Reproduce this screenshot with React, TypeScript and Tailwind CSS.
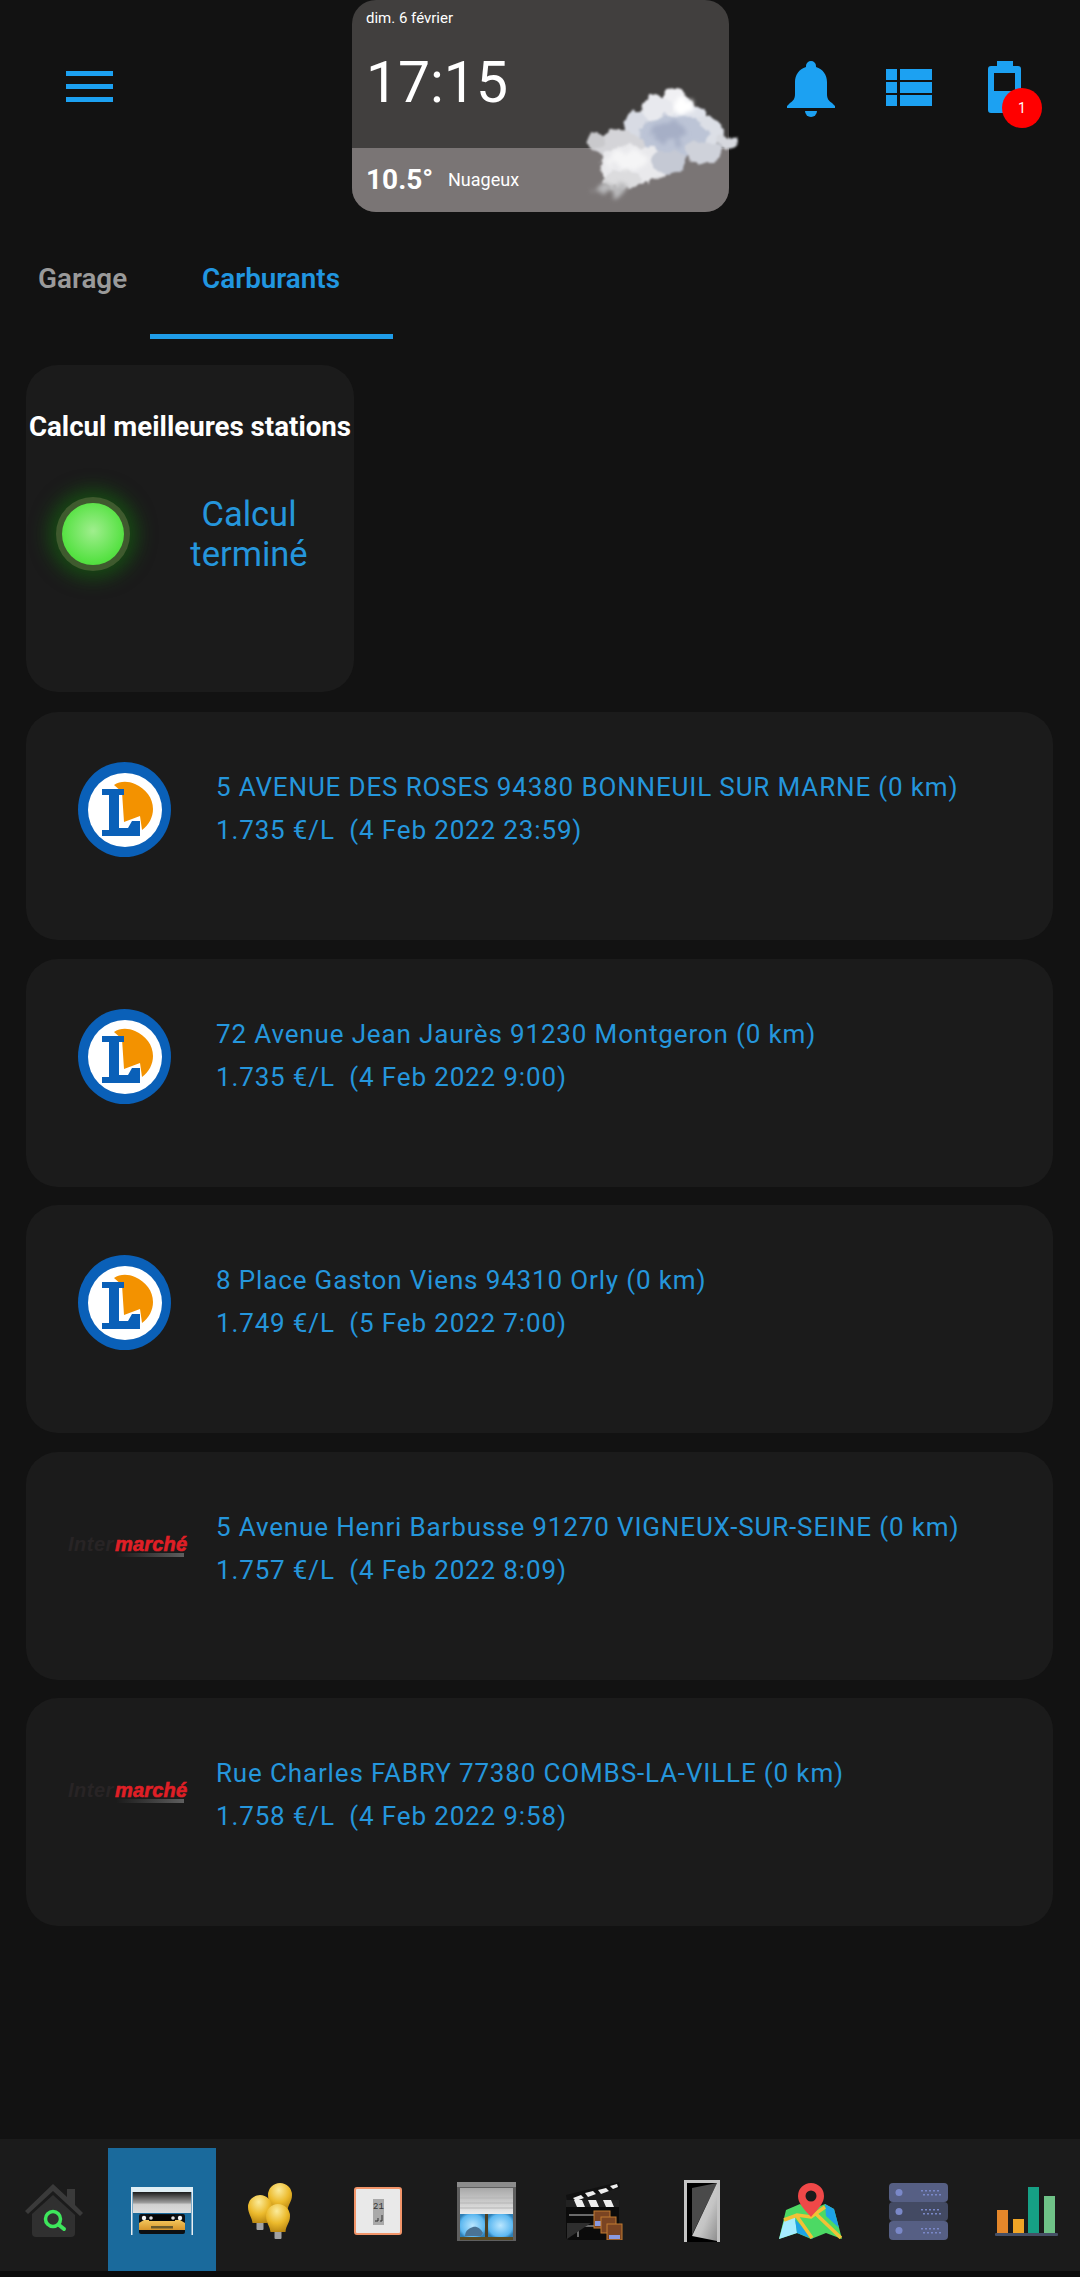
import React from "react";

const L = "font-['Roboto',sans-serif]";

function Bell() {
  return (
    <svg width="48" height="56" viewBox="0 0 48 56" className="text-[#1ca1f2]">
      <path fill="currentColor" d="M24 0a5 5 0 0 1 5 5v1c7 2 11 8 11 15v12c0 5 2 7 5 9l3 3v2H0v-2l3-3c3-2 5-4 5-9V21c0-7 4-13 11-15V5a5 5 0 0 1 5-5z" />
      <path fill="currentColor" d="M18 50h12a6 6 0 0 1-12 0z" />
    </svg>
  );
}

function TableIcon() {
  return (
    <svg width="46" height="37" viewBox="0 0 46 37">
      <g fill="#1ca1f2">
        <rect x="0" y="0" width="11" height="11" /><rect x="14" y="0" width="32" height="11" />
        <rect x="0" y="13" width="11" height="11" /><rect x="14" y="13" width="32" height="11" />
        <rect x="0" y="26" width="11" height="11" /><rect x="14" y="26" width="32" height="11" />
      </g>
    </svg>
  );
}

function Battery() {
  return (
    <div className="relative w-[33px] h-[52px]">
      <svg width="33" height="52" viewBox="0 0 33 52">
        <path fill="#1ca1f2" d="M9 0h16v5h5a3 3 0 0 1 3 3v41a3 3 0 0 1-3 3H3a3 3 0 0 1-3-3V8a3 3 0 0 1 3-3h6z" />
        <rect x="6" y="12" width="21" height="18" fill="#121212" />
      </svg>
      <div className={`absolute left-[14px] top-[27px] w-10 h-10 rounded-full bg-[#ff0000] text-white text-[14px] flex items-center justify-center ${L}`}>1</div>
    </div>
  );
}

function Cloud() {
  return (
    <svg width="185" height="139" viewBox="-16 -16 185 139" className="absolute left-[217px] top-[72px]">
      <defs>
        <filter id="cl" x="-20%" y="-20%" width="140%" height="140%">
          <feTurbulence type="fractalNoise" baseFrequency="0.08" numOctaves="4" seed="7" result="n" />
          <feDisplacementMap in="SourceGraphic" in2="n" scale="12" xChannelSelector="R" yChannelSelector="G" />
          <feGaussianBlur stdDeviation="1.1" />
        </filter>
        <filter id="cl2" x="-20%" y="-20%" width="140%" height="140%">
          <feTurbulence type="fractalNoise" baseFrequency="0.11" numOctaves="3" seed="12" result="n" />
          <feDisplacementMap in="SourceGraphic" in2="n" scale="18" xChannelSelector="G" yChannelSelector="R" />
          <feGaussianBlur stdDeviation="2" />
        </filter>
      </defs>
      <g filter="url(#cl)">
        <circle cx="90" cy="14" r="13" fill="#f0f0f3" />
        <circle cx="72" cy="24" r="16" fill="#e8e9ee" />
        <circle cx="52" cy="36" r="13" fill="#d8dbe4" />
        <circle cx="104" cy="30" r="16" fill="#dfe2ea" />
        <circle cx="124" cy="44" r="14" fill="#dcdfe6" />
        <ellipse cx="142" cy="54" rx="10" ry="7" fill="#d6d8de" />
        <ellipse cx="88" cy="48" rx="34" ry="22" fill="#bcc4d6" />
        <ellipse cx="118" cy="64" rx="18" ry="12" fill="#cfd2da" />
        <ellipse cx="34" cy="58" rx="26" ry="16" fill="#d4d4d8" />
        <ellipse cx="12" cy="52" rx="9" ry="7" fill="#c9c9cc" />
        <ellipse cx="48" cy="78" rx="34" ry="20" fill="#e9e9ec" />
        <ellipse cx="84" cy="74" rx="16" ry="12" fill="#c5c9d4" />
        <ellipse cx="36" cy="92" rx="20" ry="9" fill="#dcdcde" />
      </g>
      <g filter="url(#cl2)">
        <ellipse cx="28" cy="101" rx="16" ry="5" fill="#b9b9bb" />
        <ellipse cx="85" cy="44" rx="20" ry="10" fill="#a6afc6" />
        <ellipse cx="44" cy="72" rx="20" ry="9" fill="#f5f5f6" />
        <ellipse cx="98" cy="18" rx="10" ry="7" fill="#ffffff" />
      </g>
    </svg>
  );
}

function WeatherCard() {
  return (
    <div className={`relative w-[377px] h-[212px] ${L}`}>
      <div className="h-full rounded-[24px] overflow-hidden flex flex-col bg-[#413f3e] text-white">
        <div className="h-[148px] pl-[14px] pt-[8px]">
          <div className="text-[15px] leading-[20px]">dim. 6 février</div>
          <div className="text-[57px] leading-[68px] mt-[21px]">17:15</div>
        </div>
        <div className="h-[64px] bg-[#7a7575] flex items-center pl-[14px]">
          <span className="text-[28px] font-bold leading-none w-[82px]">10.5°</span>
          <span className="text-[18px] leading-none">Nuageux</span>
        </div>
      </div>
      <Cloud />
    </div>
  );
}

function Leclerc() {
  return (
    <svg width="93" height="95" viewBox="0 0 93 95" className="shrink-0">
      <ellipse cx="46.5" cy="47.5" rx="46.5" ry="47.5" fill="#0a60b8" />
      <ellipse cx="47" cy="48" rx="37" ry="37" fill="#ffffff" />
      <path d="M36 23 C42 19 50 19 57 22 C68 27 75 36 75 47 C75 55 71 63 64 68 L62 54 L46 60 L44 30z" fill="#f39200" />
      <path d="M24 27H46V33H41V66H50L54 59H62V74H24V68H31V33H24z" fill="#0a60b8" />
    </svg>
  );
}

function Intermarche() {
  return (
    <div className="shrink-0 w-[118px] flex flex-col items-start">
      <div className="flex items-end leading-none italic font-bold font-['Liberation_Sans',sans-serif] text-[20px]">
        <span className="text-[#282425] tracking-[0.5px] w-[47px]">Inter</span>
        <span className="text-[#e01f26] [-webkit-text-stroke:0.6px_#e01f26] tracking-[0.2px]">marché</span>
      </div>
      <div className="ml-[49px] -mt-[1px] w-[67px] h-[4px] bg-gradient-to-r from-[#1c1c1c] to-[#5e5e5e]" />
    </div>
  );
}

const stations = [
  { logo: "l", a: "5 AVENUE DES ROSES 94380 BONNEUIL SUR MARNE (0 km)", b: "1.735 €/L\u00a0\u00a0(4 Feb 2022 23:59)" },
  { logo: "l", a: "72 Avenue Jean Jaurès 91230 Montgeron (0 km)", b: "1.735 €/L\u00a0\u00a0(4 Feb 2022 9:00)" },
  { logo: "l", a: "8 Place Gaston Viens 94310 Orly (0 km)", b: "1.749 €/L\u00a0\u00a0(5 Feb 2022 7:00)" },
  { logo: "i", a: "5 Avenue Henri Barbusse 91270 VIGNEUX-SUR-SEINE (0 km)", b: "1.757 €/L\u00a0\u00a0(4 Feb 2022 8:09)" },
  { logo: "i", a: "Rue Charles FABRY 77380 COMBS-LA-VILLE (0 km)", b: "1.758 €/L\u00a0\u00a0(4 Feb 2022 9:58)" },
];

function StationCard({ s }: { s: (typeof stations)[number] }) {
  return (
    <div className="h-[228px] rounded-[32px] bg-[#1b1b1b] flex items-start">
      <div className="w-[190px] pl-[52px] shrink-0">
        {s.logo === "l" ? <div className="mt-[50px]"><Leclerc /></div> : <div className="mt-[82px] -ml-[10px]"><Intermarche /></div>}
      </div>
      <div className="pt-[54px] text-[#2596dc] text-[26px] leading-[43px] tracking-[0.85px] whitespace-nowrap">
        <div>{s.a}</div>
        <div>{s.b}</div>
      </div>
    </div>
  );
}

function HomeIcon() {
  return (
    <svg width="58" height="54" viewBox="0 0 58 54">
      <path d="M0 27 L28 0 L42 13 V5 H50 V21 L58 29 L55 32 L28 7 L3 30z" fill="#3a3a3a" />
      <path d="M7 30 L28 11 L50 31 V49 a4 4 0 0 1-4 4 H11 a4 4 0 0 1-4-4z" fill="#303030" />
      <circle cx="28" cy="35" r="7.5" fill="none" stroke="#3ee65c" strokeWidth="3.5" />
      <path d="M34 41 L39 45" stroke="#3ee65c" strokeWidth="4" strokeLinecap="round" />
    </svg>
  );
}

function GarageIcon() {
  return (
    <svg width="62" height="48" viewBox="0 0 62 48">
      <defs>
        <linearGradient id="gd" x1="0" y1="0" x2="0" y2="1"><stop offset="0" stopColor="#1c1c1c" /><stop offset="0.5" stopColor="#9a9a9a" /><stop offset="0.6" stopColor="#d0d0d0" /><stop offset="1" stopColor="#dcdcdc" /></linearGradient>
        <linearGradient id="gc" x1="0" y1="0" x2="0" y2="1"><stop offset="0" stopColor="#f3c65c" /><stop offset="1" stopColor="#d8962a" /></linearGradient>
      </defs>
      <rect x="0" y="0" width="1.5" height="48" fill="#e8eef2" />
      <rect x="60.5" y="0" width="1.5" height="48" fill="#e8eef2" />
      <rect x="0" y="0" width="62" height="5" fill="#dfeef5" />
      <rect x="2" y="5" width="58" height="21" fill="url(#gd)" />
      <rect x="8" y="27" width="46" height="20" rx="2" fill="#0d1014" />
      <path d="M8 36 L13 33 H49 L54 36 V43 H8z" fill="url(#gc)" />
      <rect x="18" y="28" width="26" height="6" fill="#050505" />
      <circle cx="13" cy="31" r="2.2" fill="#f4f4f4" /><circle cx="20" cy="31" r="1.8" fill="#ddd" />
      <circle cx="42" cy="31" r="1.8" fill="#ddd" /><circle cx="49" cy="31" r="2.2" fill="#f4f4f4" />
      <rect x="20" y="39" width="22" height="2.5" fill="#6b5a2a" />
    </svg>
  );
}

function BulbsIcon() {
  const Bulb = ({ x, y, r }: { x: number; y: number; r: number }) => (
    <g>
      <rect x={x - 3.5} y={y + r + 3} width="7" height="8" rx="1" fill="#a2a2a2" />
      <path d={`M${x - r} ${y} a${r} ${r} 0 1 1 ${2 * r} 0 c0 7 -4 9 -4.5 ${r + 4} h${-(2 * r - 9)} c-0.5 -6 -4.5 -${r - 3} -4.5 -${r + 4}z`} fill="url(#bb)" />
    </g>
  );
  return (
    <svg width="44" height="56" viewBox="-1 0 44 56">
      <defs>
        <radialGradient id="bb" cx="0.45" cy="0.25" r="0.8"><stop offset="0" stopColor="#fbeb9a" /><stop offset="0.55" stopColor="#ecba2c" /><stop offset="1" stopColor="#b5820f" /></radialGradient>
      </defs>
      <Bulb x={31} y={12} r={12} />
      <Bulb x={11} y={24} r={12} />
      <Bulb x={29} y={33} r={12} />
    </svg>
  );
}

function ThermoIcon() {
  return (
    <svg width="48" height="48" viewBox="0 0 48 48">
      <rect x="1" y="1" width="46" height="46" rx="2" fill="#e9e9e9" stroke="#f2956a" strokeWidth="2" />
      <rect x="19" y="12" width="11" height="26" fill="#a9a9a9" />
      <text x="24.5" y="22" textAnchor="middle" fontSize="9" fill="#333" fontFamily="Liberation Mono">21</text>
      <path d="M21 34h3v-3 M26 34h2v-6" stroke="#333" strokeWidth="1" fill="none" />
    </svg>
  );
}

function ShutterIcon() {
  return (
    <svg width="59" height="59" viewBox="0 0 59 59">
      <defs>
        <linearGradient id="sh" x1="0" y1="0" x2="0" y2="1"><stop offset="0" stopColor="#a8a8a8" /><stop offset="0.6" stopColor="#cfcfcf" /><stop offset="1" stopColor="#ececec" /></linearGradient>
        <radialGradient id="sk" cx="0.5" cy="0.5" r="0.6"><stop offset="0" stopColor="#b9e6ff" /><stop offset="0.8" stopColor="#5db8f0" /><stop offset="1" stopColor="#2f7fb5" /></radialGradient>
      </defs>
      <rect x="0" y="0" width="59" height="59" fill="#5f5f5f" />
      <rect x="0" y="0" width="59" height="5" fill="#8c8c8c" />
      <rect x="3" y="6" width="53" height="26" fill="url(#sh)" />
      <path d="M3 11H56 M3 16H56 M3 21H56 M3 26H56" stroke="#b5b5b5" strokeWidth="1" />
      <rect x="3" y="32" width="25" height="23" fill="url(#sk)" />
      <rect x="31" y="32" width="25" height="23" fill="url(#sk)" />
      <rect x="28" y="32" width="3" height="23" fill="#4b3f22" />
      <rect x="3" y="55" width="53" height="3" fill="#5b4a20" />
      <path d="M8 54 C8 48 13 46 16 45 C20 44 24 47 26 51 L24 54z" fill="#4a7394" />
    </svg>
  );
}

function ClapIcon() {
  return (
    <svg width="58" height="58" viewBox="0 0 58 58">
      <path d="M1 13 L54 0 L55 6 L2 19z" fill="#111" />
      <path d="M8 16 l8-3 3 3-8 3z M20 11 l8-2 3 3-8 3z M33 8 l8-2 3 3-8 3z M45 4 l7-2 1 3-5 2z" fill="#eee" />
      <rect x="1" y="18" width="53" height="40" rx="4" fill="#0b0b0b" />
      <path d="M1 18h53v7H1z" fill="#222" />
      <path d="M9 18h8l3 7h-8z M23 18h8l3 7h-8z M38 18h8l3 7h-8z" fill="#eee" />
      <path d="M4 33H30 M5 44H30 M13 44V55" stroke="#8a8a8a" strokeWidth="1.5" />
      <path d="M2 57 L26 41 H2z" fill="#2e2e2e" />
      <rect x="29" y="29" width="16" height="17" fill="#7a4422" stroke="#c07a30" />
      <rect x="30" y="39" width="6" height="5" fill="#8a9ae0" />
      <rect x="36" y="35" width="15" height="16" fill="#7a4422" stroke="#c07a30" />
      <rect x="42" y="42" width="15" height="16" fill="#7a4422" stroke="#c07a30" />
      <rect x="44" y="53" width="11" height="4" fill="#8a9ae0" />
    </svg>
  );
}

function DoorIcon() {
  return (
    <svg width="36" height="62" viewBox="0 0 36 62">
      <defs><linearGradient id="dr" x1="0" y1="0" x2="1" y2="1"><stop offset="0" stopColor="#dcdcdc" /><stop offset="0.6" stopColor="#c4c4c4" /><stop offset="1" stopColor="#8e8e8e" /></linearGradient></defs>
      <path d="M0 0H36V62H33V3H3V62H0z" fill="#c4c4c4" />
      <rect x="3" y="3" width="30" height="59" fill="#000" />
      <path d="M8 8 L33 3 L8 55z" fill="#4a4a4a" />
      <path d="M33 3 V61 L8 56z" fill="url(#dr)" />
    </svg>
  );
}

function MapIcon() {
  return (
    <svg width="63" height="56" viewBox="0 0 63 56">
      <path d="M7 27 L21 21 L32 27 L46 21 L55 26 L63 56 L47 50 L32 56 L18 50 L0 56z" fill="#4cd964" />
      <path d="M46 21 L55 26 L60 45 L47 33z" fill="#1ea3e6" />
      <path d="M0 56 L5 38 L16 34 L18 50z" fill="#a5ecff" />
      <path d="M16 36 L34 56 L18 50z" fill="#1ea3e6" />
      <path d="M5 37 L18 32 L32 34 L46 24 M17 32 L33 55 M36 30 L62 55" stroke="#f2c136" strokeWidth="3.5" fill="none" />
      <path d="M32 34 C24 25 19 20 19 13 a13 13 0 0 1 26 0 C45 20 40 25 32 34z" fill="#f04848" />
      <circle cx="32" cy="13" r="5.5" fill="#1b1b1b" />
    </svg>
  );
}

function ServerIcon() {
  const Row = ({ y, c }: { y: number; c: string }) => (
    <g>
      <rect x="0" y={y} width="59" height="19" rx="4" fill={c} />
      <circle cx="10" cy={y + 9.5} r="3.5" fill="#7a88c8" />
      {[32, 36, 40, 44, 48].map((x) => (
        <g key={x}>
          <rect x={x} y={y + 7} width="2" height="1.5" fill="#7a88c8" />
          <rect x={x + 2} y={y + 11} width="2" height="1.5" fill="#7a88c8" />
        </g>
      ))}
    </g>
  );
  return (
    <svg width="59" height="57" viewBox="0 0 59 57">
      <Row y={0} c="#565f84" />
      <Row y={19} c="#434a63" />
      <Row y={38} c="#565f84" />
    </svg>
  );
}

function BarsIcon() {
  return (
    <svg width="63" height="49" viewBox="0 0 63 49">
      <rect x="2" y="23" width="11" height="23" fill="#e5872a" />
      <rect x="18" y="32" width="11" height="14" fill="#f0a526" />
      <rect x="33" y="0" width="11" height="46" fill="#16a085" />
      <rect x="49" y="9" width="11" height="37" fill="#6fc287" />
      <rect x="0" y="46" width="63" height="3" rx="1" fill="#465066" />
    </svg>
  );
}

const navItems = [
  <HomeIcon />, <GarageIcon />, <BulbsIcon />, <ThermoIcon />, <ShutterIcon />,
  <ClapIcon />, <DoorIcon />, <MapIcon />, <ServerIcon />, <BarsIcon />,
];

export default function App() {
  return (
    <div className={`w-[1080px] h-[2277px] bg-[#121212] flex flex-col overflow-hidden ${L}`}>
      <header className="h-[212px] flex shrink-0">
        <div className="w-[352px] pl-[66px] pt-[71px]">
          <div className="w-[47px] flex flex-col gap-[8px]">
            <div className="h-[5px] bg-[#1ca1f2]" />
            <div className="h-[5px] bg-[#1ca1f2]" />
            <div className="h-[5px] bg-[#1ca1f2]" />
          </div>
        </div>
        <WeatherCard />
        <div className="flex items-start">
          <div className="ml-[58px] mt-[61px]"><Bell /></div>
          <div className="ml-[51px] mt-[69px]"><TableIcon /></div>
          <div className="ml-[56px] mt-[61px]"><Battery /></div>
        </div>
      </header>

      <div className="h-[127px] flex items-start shrink-0 text-[27.8px] font-semibold">
        <div className="w-[150px] pt-[51px] pl-[38px] text-[#9a9a9a] leading-[32px]">Garage</div>
        <div className="w-[243px] h-[127px] flex flex-col items-center">
          <div className="pt-[51px] pr-[1px] text-[#2196e0] leading-[32px] h-[122px]">Carburants</div>
          <div className="w-full h-[5px] bg-[#1f9ce8]" />
        </div>
      </div>

      <main className="pl-[26px] pr-[27px] pt-[26px] flex flex-col">
        <div className="w-[328px] h-[327px] rounded-[32px] bg-[#1b1b1b] flex flex-col">
          <div className="pt-[46px] text-white font-bold text-[27.7px] leading-[32px] whitespace-nowrap flex justify-center">Calcul meilleures stations</div>
          <div className="flex items-center mt-[51px]">
            <div className="w-[134px] flex items-center justify-center">
              <div className="w-[74px] h-[74px] rounded-full bg-[#3f5a2e] flex items-center justify-center shadow-[0_0_18px_8px_rgba(20,110,15,0.55)]">
                <div className="w-[62px] h-[62px] rounded-full bg-[radial-gradient(circle_at_50%_45%,#a0ee8e_0%,#58e245_65%,#3ad42a_100%)]" />
              </div>
            </div>
            <div className="text-[#2596dc] text-[34.5px] leading-[40px] text-center w-[178px]">Calcul terminé</div>
          </div>
        </div>
        <div className="mt-[20px] flex flex-col gap-[18.6px]">
          {stations.map((s) => <StationCard key={s.a} s={s} />)}
        </div>
      </main>

      <div className="flex-1" />
      <nav className="h-[132px] bg-[#1b1b1b] shrink-0 flex items-end">
        {navItems.map((icon, i) => (
          <div key={i} className={`w-[108px] h-[123px] flex items-center justify-center pt-[3px] ${i === 1 ? "bg-[#1a6a9c]" : ""}`}>{icon}</div>
        ))}
      </nav>
      <div className="h-[6px] bg-[#0c0c0c] shrink-0" />
    </div>
  );
}
